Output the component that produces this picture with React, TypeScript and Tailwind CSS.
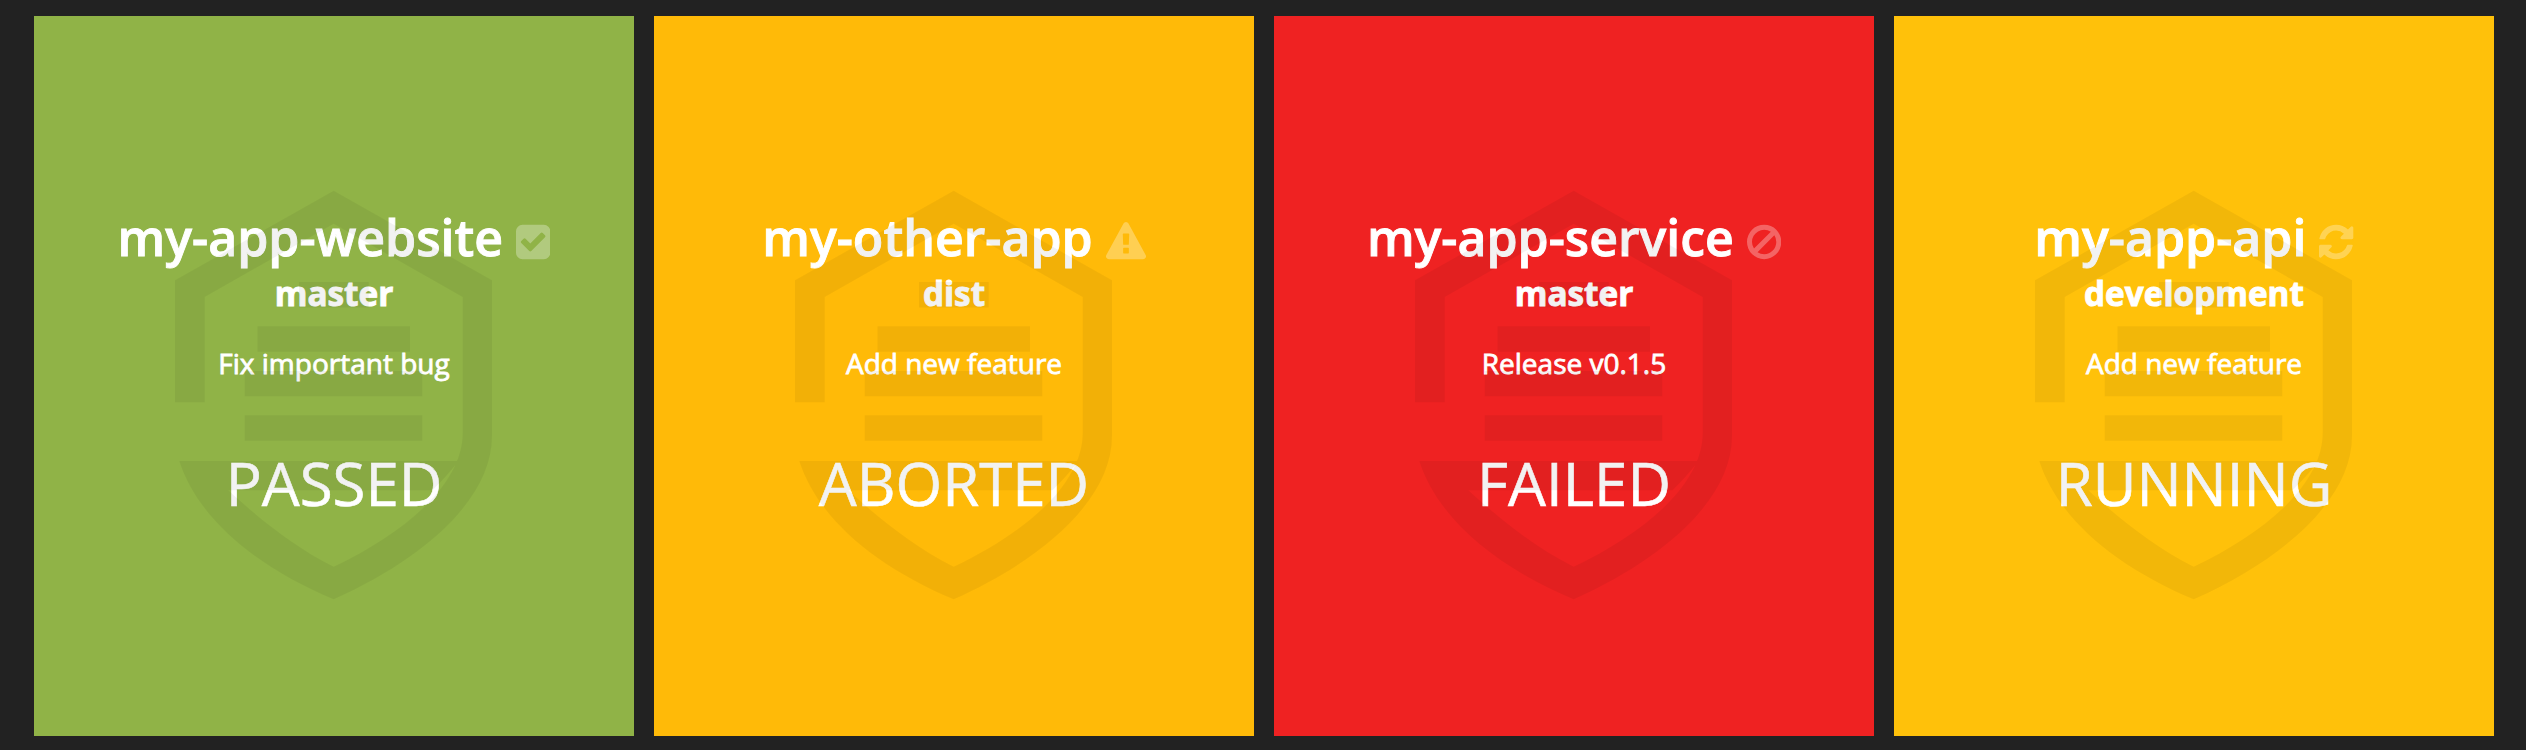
interface GlyphProps {
  d: string;
  wide?: boolean;
}

function Glyph({ d, wide }: GlyphProps) {
  return (
    <svg
      viewBox={wide ? "0 0 1792 1792" : "128 0 1536 1792"}
      className={wide ? "mt-[10px] h-10 w-10 text-white/30" : "mt-[10px] h-10 w-[34.3px] text-white/30"}
      fill="currentColor"
      aria-hidden="true"
    >
      <path d={d} />
    </svg>
  );
}

const CHECK =
  "M813 1299l614-614q19-19 19-45t-19-45l-102-102q-19-19-45-19t-45 19l-467 467-211-211q-19-19-45-19t-45 19l-102 102q-19 19-19 45t19 45l358 358q19 19 45 19t45-19zm851-883v960q0 119-84.5 203.5t-203.5 84.5h-960q-119 0-203.5-84.5t-84.5-203.5v-960q0-119 84.5-203.5t203.5-84.5h960q119 0 203.5 84.5t84.5 203.5z";
const WARNING =
  "M1024 1375v-190q0-14-9.5-23.5t-22.5-9.5h-192q-13 0-22.5 9.5t-9.5 23.5v190q0 14 9.5 23.5t22.5 9.5h192q13 0 22.5-9.5t9.5-23.5zm-2-374l18-459q0-12-10-19-13-11-24-11h-220q-11 0-24 11-10 7-10 21l17 457q0 10 10 16.5t24 6.5h185q14 0 23.5-6.5t10.5-16.5zm-14-934l768 1408q35 63-2 126-17 29-46.5 46t-63.5 17h-1536q-34 0-63.5-17t-46.5-46q-37-63-2-126l768-1408q17-31 47-49t65-18 65 18 47 49z";
const BAN =
  "M1440 893q0-161-87-295l-754 753q137 89 297 89 111 0 211.5-43.5t173.5-116.5 116-174.5 43-212.5zm-999 299l755-754q-135-91-300-91-148 0-273 73t-198 199-73 274q0 162 89 299zm1223-299q0 157-61 300t-163.5 246-245 164-298.5 61-298.5-61-245-164-163.5-246-61-300 61-299.5 163.5-245.5 245-164 298.5-61 298.5 61 245 164 163.5 245.5 61 299.5z";
const REFRESH =
  "M1639 1056q0 5-1 7-64 268-268 434.5t-478 166.5q-146 0-282.5-55t-243.5-157l-129 129q-19 19-45 19t-45-19-19-45v-448q0-26 19-45t45-19h448q26 0 45 19t19 45-19 45l-137 137q71 66 161 102t187 36q134 0 250-65t186-179q11-17 53-117 8-23 30-23h192q13 0 22.5 9.5t9.5 22.5zm25-800v448q0 26-19 45t-45 19h-448q-26 0-45-19t-19-45 19-45l138-138q-148-137-349-137-134 0-250 65t-186 179q-11 17-53 117-8 23-30 23h-199q-13 0-22.5-9.5t-9.5-22.5v-7q65-268 270-434.5t480-166.5q146 0 284 55.5t245 156.5l130-129q19-19 45-19t45 19 19 45z";

function Shield() {
  return (
    <svg
      viewBox="0 0 600 720"
      className="pointer-events-none absolute inset-0 h-[720px] w-[600px] text-black/5"
      fill="currentColor"
      aria-hidden="true"
    >
      <path d="M141 386.3V264.3L299.7 174.8L458 264.3V420C458 482 392 542 299.7 583.3C218 549 163 500 145.3 445H424.5C416 456 408 465 398.5 474.3H194.3C220 498 258 530 299.7 550.7C375 515 428.7 466 428.7 417V281L299.7 207.7L170.7 281V386.3Z" />
      <path d="M265 266h69.7v25.5H265zM223.5 310.3H376V335.8H223.5zM210.7 355H388.3V380.2H210.7zM210.7 399.3H388.3V424.7H210.7z" />
    </svg>
  );
}

interface Build {
  name: string;
  branch: string;
  message: string;
  status: string;
  color: string;
  icon: string;
  wideIcon?: boolean;
}

const builds: Build[] = [
  { name: "my-app-website", branch: "master", message: "Fix important bug", status: "PASSED", color: "bg-[#90b347]", icon: CHECK },
  { name: "my-other-app", branch: "dist", message: "Add new feature", status: "ABORTED", color: "bg-[#ffba08]", icon: WARNING, wideIcon: true },
  { name: "my-app-service", branch: "master", message: "Release v0.1.5", status: "FAILED", color: "bg-[#ef2222]", icon: BAN },
  { name: "my-app-api", branch: "development", message: "Add new feature", status: "RUNNING", color: "bg-[#ffc10a]", icon: REFRESH },
];

function Tile({ build }: { build: Build }) {
  return (
    <article className={`relative flex h-[720px] w-[600px] flex-col items-center pt-[181px] text-white ${build.color}`}>
      <h2 className="flex h-20 items-center gap-[13px] text-[50px] leading-[80px] font-semibold whitespace-nowrap [-webkit-text-stroke:0.9px_white]">
        <span>{build.name}</span>
        <Glyph d={build.icon} wide={build.wideIcon} />
      </h2>
      <h3 className="-mt-1 h-10 text-[33.3px] leading-10 font-bold [-webkit-text-stroke:0.9px_white]">{build.branch}</h3>
      <p className="mt-[30px] h-10 text-[28px] leading-10 [-webkit-text-stroke:0.8px_white]">{build.message}</p>
      <p className="mt-[60px] h-20 text-[60px] leading-[80px] [-webkit-text-stroke:0.6px_white]">{build.status}</p>
      <Shield />
    </article>
  );
}

export default function App() {
  return (
    <main className="flex h-[750px] w-[2526px] gap-5 bg-[#222222] pt-4 pl-[34px] font-['Open_Sans',sans-serif]">
      {builds.map((build) => (
        <Tile key={build.name} build={build} />
      ))}
    </main>
  );
}
